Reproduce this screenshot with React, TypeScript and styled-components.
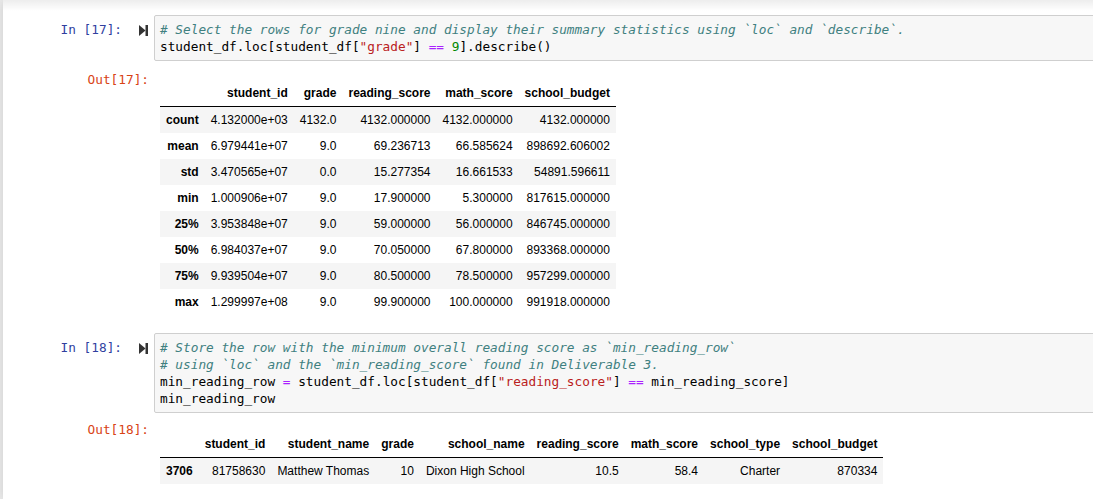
import React from "react";
import styled, { createGlobalStyle } from "styled-components";

const Global = createGlobalStyle`
  html, body {
    margin: 0;
    padding: 0;
    background: #eeeeee;
    overflow: hidden;
  }
  body {
    width: 1093px;
    height: 499px;
  }
`;

const Notebook = styled.div`
  margin-left: 3px;
  width: 1140px;
  height: 499px;
  background: #ffffff;
  box-shadow: 0 0 12px 1px rgba(87, 87, 87, 0.2);
`;

const HeaderShade = styled.div`
  height: 11px;
  background: linear-gradient(to bottom, rgba(0, 0, 0, 0.07), rgba(0, 0, 0, 0));
`;

const Row = styled.div<{ $top?: number }>`
  display: flex;
  align-items: flex-start;
  margin-top: ${(p) => p.$top ?? 0}px;
`;

const PromptCol = styled.div<{ $out?: boolean; $pt?: number }>`
  flex: none;
  width: 151px;
  box-sizing: border-box;
  display: flex;
  justify-content: flex-end;
  align-items: center;
  gap: 17px;
  padding-top: ${(p) => p.$pt ?? 6}px;
  padding-right: ${(p) => (p.$out ? 5 : 6)}px;
  font-family: "DejaVu Sans Mono", "Liberation Mono", monospace;
  font-size: 12.75px;
  line-height: 17px;
  color: ${(p) => (p.$out ? "#d84315" : "#303f9f")};
  white-space: pre;
`;

const RunIcon = styled.svg`
  display: block;
  width: 9px;
  height: 11px;
  margin-top: 1px;
`;

const InputArea = styled.div`
  flex: 1;
  border: 1px solid #cfcfcf;
  border-radius: 2px;
  background: #f7f7f7;
  padding: 5px 0 5px 5px;
`;

const CodeLine = styled.pre`
  margin: 0;
  font-family: "DejaVu Sans Mono", "Liberation Mono", monospace;
  font-size: 12.75px;
  line-height: 17px;
  color: #000000;
  white-space: pre;
`;

const Comment = styled.span`
  color: #408080;
  font-style: italic;
`;
const Str = styled.span`
  color: #ba2121;
`;
const Op = styled.span`
  color: #aa22ff;
`;
const Num = styled.span`
  color: #008800;
`;

const OutputArea = styled.div<{ $pt: number }>`
  flex: 1;
  padding-left: 6px;
  padding-top: ${(p) => p.$pt}px;
`;

const DataTable = styled.table`
  border-collapse: collapse;
  border-spacing: 0;
  border: none;
  font-family: "Liberation Sans", Arial, Helvetica, sans-serif;
  font-size: 12px;
  color: #000000;
`;

const HeadRow = styled.tr`
  border-bottom: 1px solid #000000;
`;

const BodyRow = styled.tr`
  &:nth-child(odd) {
    background: #f5f5f5;
  }
`;

const HeadCell = styled.th`
  padding: 6px;
  text-align: right;
  vertical-align: bottom;
  font-weight: bold;
  line-height: normal;
  white-space: nowrap;
`;

const IndexCell = styled.th`
  padding: 6px;
  text-align: right;
  vertical-align: middle;
  font-weight: bold;
  line-height: normal;
  white-space: nowrap;
`;

const ValueCell = styled.td`
  padding: 6px;
  text-align: right;
  vertical-align: middle;
  line-height: normal;
  white-space: nowrap;
`;

const Run = () => (
  <RunIcon viewBox="0 0 9 11">
    <path d="M0 0 L6.5 5.5 L0 11 Z" fill="#333333" />
    <rect x="6.5" y="0" width="2.5" height="11" fill="#333333" />
  </RunIcon>
);

const describeCols = ["student_id", "grade", "reading_score", "math_score", "school_budget"];
const describeRows: [string, string[]][] = [
  ["count", ["4.132000e+03", "4132.0", "4132.000000", "4132.000000", "4132.000000"]],
  ["mean", ["6.979441e+07", "9.0", "69.236713", "66.585624", "898692.606002"]],
  ["std", ["3.470565e+07", "0.0", "15.277354", "16.661533", "54891.596611"]],
  ["min", ["1.000906e+07", "9.0", "17.900000", "5.300000", "817615.000000"]],
  ["25%", ["3.953848e+07", "9.0", "59.000000", "56.000000", "846745.000000"]],
  ["50%", ["6.984037e+07", "9.0", "70.050000", "67.800000", "893368.000000"]],
  ["75%", ["9.939504e+07", "9.0", "80.500000", "78.500000", "957299.000000"]],
  ["max", ["1.299997e+08", "9.0", "99.900000", "100.000000", "991918.000000"]],
];

const minCols = [
  "student_id",
  "student_name",
  "grade",
  "school_name",
  "reading_score",
  "math_score",
  "school_type",
  "school_budget",
];
const minRows: [string, string[]][] = [
  ["3706", ["81758630", "Matthew Thomas", "10", "Dixon High School", "10.5", "58.4", "Charter", "870334"]],
];

const Frame = ({ cols, rows }: { cols: string[]; rows: [string, string[]][] }) => (
  <DataTable>
    <thead>
      <HeadRow>
        <HeadCell />
        {cols.map((c) => (
          <HeadCell key={c}>{c}</HeadCell>
        ))}
      </HeadRow>
    </thead>
    <tbody>
      {rows.map(([idx, vals]) => (
        <BodyRow key={idx}>
          <IndexCell>{idx}</IndexCell>
          {vals.map((v, i) => (
            <ValueCell key={i}>{v}</ValueCell>
          ))}
        </BodyRow>
      ))}
    </tbody>
  </DataTable>
);

export default function App() {
  return (
    <>
      <Global />
      <Notebook>
        <HeaderShade />
        <Row $top={4}>
          <PromptCol>
            <span>In [17]:</span>
            <Run />
          </PromptCol>
          <InputArea>
            <CodeLine>
              <Comment># Select the rows for grade nine and display their summary statistics using `loc` and `describe`.</Comment>
            </CodeLine>
            <CodeLine>
              student_df.loc[student_df[<Str>"grade"</Str>] <Op>==</Op> <Num>9</Num>].describe()
            </CodeLine>
          </InputArea>
        </Row>
        <Row>
          <PromptCol $out $pt={10}>
            <span>Out[17]:</span>
          </PromptCol>
          <OutputArea $pt={19}>
            <Frame cols={describeCols} rows={describeRows} />
          </OutputArea>
        </Row>
        <Row $top={18}>
          <PromptCol>
            <span>In [18]:</span>
            <Run />
          </PromptCol>
          <InputArea>
            <CodeLine>
              <Comment># Store the row with the minimum overall reading score as `min_reading_row`</Comment>
            </CodeLine>
            <CodeLine>
              <Comment># using `loc` and the `min_reading_score` found in Deliverable 3.</Comment>
            </CodeLine>
            <CodeLine>
              min_reading_row <Op>=</Op> student_df.loc[student_df[<Str>"reading_score"</Str>] <Op>==</Op> min_reading_score]
            </CodeLine>
            <CodeLine>min_reading_row</CodeLine>
          </InputArea>
        </Row>
        <Row>
          <PromptCol $out $pt={8}>
            <span>Out[18]:</span>
          </PromptCol>
          <OutputArea $pt={18}>
            <Frame cols={minCols} rows={minRows} />
          </OutputArea>
        </Row>
      </Notebook>
    </>
  );
}
